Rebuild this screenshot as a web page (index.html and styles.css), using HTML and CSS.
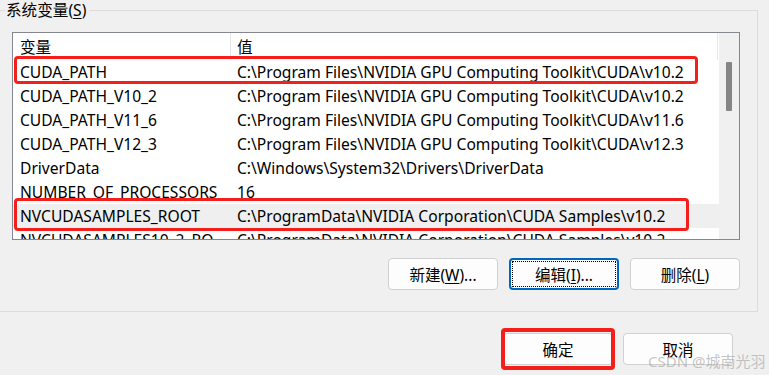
FILE: index.html
```html
<!DOCTYPE html>
<html lang="zh-CN">
<head>
    <meta charset="UTF-8">
    <meta name="viewport" content="width=device-width, initial-scale=1.0">
    <title>环境变量</title>
    <link rel="stylesheet" href="styles.css">
</head>
<body>
    <fieldset class="group">
        <legend>系统变量(<u>S</u>)</legend>
        <div class="list">
            <div class="list-body">
                <div class="list-head">
                    <div class="col-name">变量</div>
                    <div class="col-value">值</div>
                </div>
                <div class="row">
                    <div class="col-name">CUDA_PATH</div>
                    <div class="col-value">C:\Program Files\NVIDIA GPU Computing Toolkit\CUDA\v10.2</div>
                    <span class="mark mark-first"></span>
                </div>
                <div class="row">
                    <div class="col-name">CUDA_PATH_V10_2</div>
                    <div class="col-value">C:\Program Files\NVIDIA GPU Computing Toolkit\CUDA\v10.2</div>
                </div>
                <div class="row">
                    <div class="col-name">CUDA_PATH_V11_6</div>
                    <div class="col-value">C:\Program Files\NVIDIA GPU Computing Toolkit\CUDA\v11.6</div>
                </div>
                <div class="row">
                    <div class="col-name">CUDA_PATH_V12_3</div>
                    <div class="col-value">C:\Program Files\NVIDIA GPU Computing Toolkit\CUDA\v12.3</div>
                </div>
                <div class="row">
                    <div class="col-name">DriverData</div>
                    <div class="col-value">C:\Windows\System32\Drivers\DriverData</div>
                </div>
                <div class="row">
                    <div class="col-name">NUMBER_OF_PROCESSORS</div>
                    <div class="col-value">16</div>
                </div>
                <div class="row selected">
                    <div class="col-name">NVCUDASAMPLES_ROOT</div>
                    <div class="col-value">C:\ProgramData\NVIDIA Corporation\CUDA Samples\v10.2</div>
                    <span class="mark mark-second"></span>
                </div>
                <div class="row">
                    <div class="col-name">NVCUDASAMPLES10_2_ROOT</div>
                    <div class="col-value">C:\ProgramData\NVIDIA Corporation\CUDA Samples\v10.2</div>
                </div>
            </div>
            <div class="scrollbar">
                <div class="thumb"></div>
            </div>
        </div>
        <div class="actions">
            <button class="btn">新建(<u>W</u>)...</button>
            <button class="btn focused">编辑(<u>I</u>)...</button>
            <button class="btn">删除(<u>L</u>)</button>
        </div>
    </fieldset>
    <div class="footer">
        <button class="btn ok">确定<span class="mark mark-ok"></span></button>
        <button class="btn">取消</button>
    </div>
    <div class="watermark">CSDN @城南光羽</div>
</body>
</html>
```

FILE: styles.css
```css
html {
    overflow: hidden;
}
body {
    margin: 0;
    height: 375px;
    overflow: hidden;
    position: relative;
    background-color: #f0f0f0;
    font-family: "Noto Sans", "Noto Sans CJK SC", sans-serif;
    font-size: 15.6px;
    color: #000;
}
u {
    text-decoration-thickness: 1px;
    text-underline-offset: 2px;
}
.group {
    margin: 0 0 0 -10px;
    padding: 0 16px 0 21px;
    width: 729px;
    height: 310px;
    box-sizing: content-box;
    border: 1px solid #dcdcdc;
    border-radius: 0;
}
.group legend {
    margin-left: -7px;
    padding: 0 3px 0 1px;
    line-height: 20px;
}
.list {
    margin-top: 12px;
    width: 726px;
    height: 206px;
    border: 1px solid #828790;
    background-color: #fff;
    display: flex;
    overflow: hidden;
}
.list-body {
    width: 706px;
    overflow: hidden;
}
.list-head {
    display: flex;
    height: 27px;
    align-items: center;
    border-right: 1px solid #e5e5e5;
    width: 704px;
}
.list-head .col-name {
    border-right: 1px solid #e5e5e5;
    height: 100%;
    display: flex;
    align-items: center;
}
.row {
    display: flex;
    height: 24px;
    align-items: center;
    position: relative;
    white-space: nowrap;
}
.row.selected {
    background-color: #efefef;
}
.col-name {
    width: 210px;
    padding-left: 7px;
    flex-shrink: 0;
    overflow: hidden;
    text-overflow: ellipsis;
}
.col-value {
    padding-left: 6px;
}
.row .col-name {
    width: 211px;
}
.mark {
    position: absolute;
    border: 3px solid #f41f1b;
    border-radius: 4px;
    box-sizing: border-box;
}
.mark-first {
    left: 1px;
    top: -4px;
    width: 684px;
    height: 28px;
}
.mark-second {
    left: 1px;
    top: -6px;
    width: 675px;
    height: 33px;
}
.scrollbar {
    width: 20px;
    background-color: #f0f0f0;
    display: flex;
    justify-content: center;
    padding-top: 29px;
}
.thumb {
    width: 6px;
    height: 49px;
    background-color: #858585;
    border-radius: 1px;
}
.actions {
    display: flex;
    justify-content: flex-end;
    gap: 11px;
    margin-top: 18px;
    width: 728px;
}
.btn {
    width: 110px;
    height: 32px;
    border: 1px solid #d0d0d0;
    border-radius: 4px;
    background-color: #fdfdfd;
    font-family: "Noto Sans", "Noto Sans CJK SC", sans-serif;
    font-size: 15.5px;
    color: #000;
    padding: 0;
    position: relative;
}
.btn.focused {
    border: 2px solid #0067c0;
    outline: 1px dotted #000;
    outline-offset: -4px;
}
.footer {
    display: flex;
    gap: 10px;
    padding: 21px 0 0 503px;
}
.mark-ok {
    left: -3px;
    top: -6px;
    width: 114px;
    height: 42px;
    border-width: 4px;
}
.watermark {
    position: absolute;
    left: 648px;
    top: 350px;
    font-size: 15px;
    white-space: nowrap;
    color: rgba(160, 160, 160, 0.6);
}
```
